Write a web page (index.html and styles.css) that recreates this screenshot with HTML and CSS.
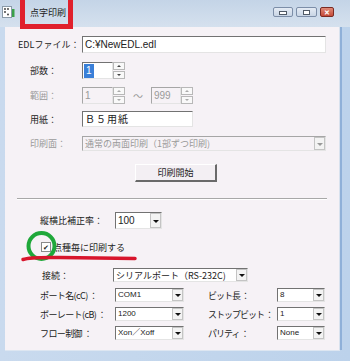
FILE: index.html
```html
<!DOCTYPE html>
<html lang="ja">
<head>
    <meta charset="utf-8">
    <title>点字印刷</title>
    <link rel="stylesheet" href="styles.css">
</head>
<body>

<div class="window">
    <div class="titlebar">
        <svg class="app-icon" width="13" height="12" viewBox="0 0 13 12">
            <rect x="0.5" y="0.5" width="9" height="11" fill="#fff" stroke="#8a9aa8"/>
            <circle cx="3" cy="3" r="0.9" fill="#333"/>
            <circle cx="6" cy="3" r="0.9" fill="#333"/>
            <circle cx="3" cy="6" r="0.9" fill="#333"/>
            <circle cx="6" cy="8.5" r="0.9" fill="#333"/>
            <rect x="10" y="3" width="2.5" height="8" fill="#3aa04a"/>
        </svg>
        <span class="title">点字印刷</span>
        <div class="caption-buttons">
            <div class="cap-btn cap-min"><span></span></div>
            <div class="cap-btn cap-max"><span></span></div>
            <div class="cap-btn cap-close">&#x2715;</div>
        </div>
    </div>

    <div class="client">
        <div class="row row-edl">
            <label class="lbl lbl-edl">EDLファイル：</label>
            <div class="edit w-edl">C:¥NewEDL.edl</div>
        </div>

        <div class="row row-copies">
            <label class="lbl lbl-main">部数：</label>
            <div class="edit w-spin"><span class="selected">1</span></div>
            <div class="spin"><span class="up"></span><span class="down"></span></div>
        </div>

        <div class="row row-range disabled">
            <label class="lbl lbl-main">範囲：</label>
            <div class="edit w-spin">1</div>
            <div class="spin"><span class="up"></span><span class="down"></span></div>
            <span class="tilde">～</span>
            <div class="edit w-spin2">999</div>
            <div class="spin"><span class="up"></span><span class="down"></span></div>
        </div>

        <div class="row row-paper">
            <label class="lbl lbl-main">用紙：</label>
            <div class="edit w-paper wide">Ｂ５用紙</div>
        </div>

        <div class="row row-side disabled">
            <label class="lbl lbl-main">印刷面：</label>
            <div class="combo w-side">
                <span class="combo-text">通常の両面印刷（1部ずつ印刷)</span>
                <span class="drop"></span>
            </div>
        </div>

        <div class="row row-button">
            <button class="push">印刷開始</button>
        </div>

        <div class="separator"></div>

        <div class="row row-ratio">
            <label class="lbl lbl-ratio">縦横比補正率：</label>
            <div class="combo w-ratio">
                <span class="combo-text latin">100</span>
                <span class="drop"></span>
            </div>
        </div>

        <div class="row row-check">
            <span class="checkbox">&#x2714;</span>
            <label class="check-label">点種毎に印刷する</label>
        </div>

        <div class="row row-conn">
            <label class="lbl lbl-conn">接続：</label>
            <div class="combo w-conn">
                <span class="combo-text">シリアルポート（RS-232C)</span>
                <span class="drop"></span>
            </div>
        </div>

        <div class="serial">
            <label class="lbl">ポート名(cC) ：</label>
            <div class="combo"><span class="combo-text small">COM1</span><span class="drop"></span></div>
            <label class="lbl lbl-right">ビット長 ：</label>
            <div class="combo"><span class="combo-text small">8</span><span class="drop"></span></div>

            <label class="lbl">ボーレート(cB) ：</label>
            <div class="combo"><span class="combo-text small">1200</span><span class="drop"></span></div>
            <label class="lbl lbl-right">ストップビット ：</label>
            <div class="combo"><span class="combo-text small">1</span><span class="drop"></span></div>

            <label class="lbl">フロー制御 ：</label>
            <div class="combo"><span class="combo-text small">Xon／Xoff</span><span class="drop"></span></div>
            <label class="lbl lbl-right">パリティ ：</label>
            <div class="combo"><span class="combo-text small">None</span><span class="drop"></span></div>
        </div>
    </div>

    <!-- hand-drawn marks on top of the screenshot -->
    <svg class="marks" width="350" height="361" viewBox="0 0 350 361">
        <rect x="22.5" y="-5" width="48" height="31.5" fill="none" stroke="#e0202c" stroke-width="5"/>
        <circle cx="41.5" cy="246" r="13" fill="none" stroke="#1fa83a" stroke-width="4"/>
        <path d="M23 259.5 Q30 257 60 257.5 T135 258.5" fill="none" stroke="#d8152c" stroke-width="3.5" stroke-linecap="round"/>
    </svg>
</div>

</body>
</html>
```

FILE: styles.css
```css
body {
    margin: 0;
    font-family: "Noto Sans CJK JP", sans-serif;
    font-size: 9px;
    color: #222;
}
.window {
    position: relative;
    width: 350px;
    height: 361px;
    box-sizing: border-box;
    display: flex;
    flex-direction: column;
    background: linear-gradient(90deg, #c9daee 0, #bcd2eb 100%);
}
.titlebar {
    height: 27px;
    display: flex;
    align-items: flex-start;
    background: linear-gradient(#c4d4e7, #d5e1ee);
}
.app-icon {
    margin: 6px 0 0 2px;
}
.title {
    margin: 6px 0 0 15px;
    font-size: 9px;
    color: #1c1c1c;
}
.caption-buttons {
    display: flex;
    margin: 7px 16px 0 auto;
}
.cap-btn {
    height: 10px;
    box-sizing: border-box;
    border: 1px solid #7c8ea8;
    border-radius: 2px;
    background: linear-gradient(#e4ebf4, #c8d5e5);
    display: flex;
    align-items: center;
    justify-content: center;
}
.cap-min {
    width: 20px;
    margin-right: 3px;
}
.cap-min span {
    width: 6px;
    height: 2px;
    margin-top: 2px;
    background: #fff;
    border: 1px solid #505a66;
}
.cap-max {
    width: 21px;
    margin-right: 3px;
}
.cap-max span {
    width: 5px;
    height: 3px;
    border: 1px solid #505a66;
    background: #fff;
}
.cap-close {
    width: 14px;
    border-color: #7a2a22;
    background: linear-gradient(#e08a78, #c44a38);
    color: #fff;
    font-size: 7px;
    font-weight: bold;
    line-height: 1;
}
.client {
    flex: 1;
    margin: 0 10px 11px 5px;
    background: #f6f2f6;
    border-right: 1px solid #d8e2ee;
    box-shadow: 2px 0 0 #8fb0d8, 0 1px 0 #dde6f1;
}
.row {
    display: flex;
    align-items: center;
}
.lbl {
    white-space: nowrap;
}
.edit, .combo {
    box-sizing: border-box;
    background: #fff;
    border-top: 1px solid #727272;
    border-left: 1px solid #727272;
    border-right: 1px solid #e4e4e4;
    border-bottom: 1px solid #e4e4e4;
    font-family: "Liberation Sans", "Noto Sans CJK JP", sans-serif;
    font-size: 10px;
    line-height: 1;
    padding: 0 2px;
    display: flex;
    align-items: center;
    white-space: nowrap;
    overflow: hidden;
}
.disabled .lbl,
.disabled .edit,
.disabled .combo-text,
.disabled .tilde {
    color: #9a9a9a;
}
.disabled .edit,
.disabled .combo {
    background: #f6f2f6;
    border-top-color: #a6a6a6;
    border-left-color: #a6a6a6;
}
.spin {
    width: 12px;
    height: 100%;
    display: flex;
    flex-direction: column;
    gap: 1px;
}
.spin span {
    flex: 1;
    box-sizing: border-box;
    border: 1px solid #b8b8b8;
    background: #f9f9f9;
    position: relative;
}
.spin span::after {
    content: "";
    position: absolute;
    left: 3px;
    top: 2px;
    border-left: 2px solid transparent;
    border-right: 2px solid transparent;
}
.spin .up::after {
    border-bottom: 2px solid #444;
}
.spin .down::after {
    border-top: 2px solid #444;
}
.disabled .spin .up::after {
    border-bottom-color: #aaa;
}
.disabled .spin .down::after {
    border-top-color: #aaa;
}
.selected {
    background: #3a7fd8;
    color: #fff;
    padding: 2px 2px;
    margin-left: -1px;
}

.row-edl {
    margin-top: 9px;
    padding-left: 13px;
    height: 17px;
}
.lbl-edl {
    width: 64px;
}
.w-edl {
    width: 244px;
    height: 17px;
    font-size: 10px;
}
.lbl-main {
    width: 52px;
}
.row-copies {
    margin-top: 9px;
    padding-left: 25px;
    height: 17px;
}
.w-spin {
    width: 31px;
    height: 17px;
}
.row-range {
    margin-top: 8px;
    padding-left: 25px;
    height: 17px;
}
.tilde {
    width: 26px;
    text-align: center;
    font-size: 10px;
}
.w-spin2 {
    width: 30px;
    height: 17px;
}
.row-paper {
    margin-top: 7px;
    padding-left: 25px;
    height: 16px;
}
.w-paper {
    width: 111px;
    height: 16px;
}
.wide {
    font-family: "Noto Sans CJK JP", sans-serif;
    font-size: 10px;
    letter-spacing: 1px;
}
.row-side {
    margin-top: 9px;
    padding-left: 25px;
    height: 15px;
}
.combo {
    padding-right: 0;
    justify-content: space-between;
}
.combo-text {
    font-family: "Noto Sans CJK JP", sans-serif;
    font-size: 9px;
}
.combo-text.latin {
    font-family: "Liberation Sans", sans-serif;
    font-size: 10px;
}
.combo-text.small {
    font-family: "Liberation Sans", "Noto Sans CJK JP", sans-serif;
    font-size: 8px;
}
.drop {
    width: 11px;
    height: 100%;
    box-sizing: border-box;
    border: 1px solid #c4c4c4;
    background: #f3f3f3;
    position: relative;
}
.drop::after {
    content: "";
    position: absolute;
    left: 2px;
    top: 50%;
    margin-top: -1px;
    border-left: 3px solid transparent;
    border-right: 3px solid transparent;
    border-top: 3px solid #111;
}
.disabled .drop::after {
    border-top-color: #999;
}
.w-side {
    width: 244px;
    height: 15px;
}
.row-button {
    margin-top: 13px;
    padding-left: 130px;
}
.push {
    width: 82px;
    height: 18px;
    box-sizing: border-box;
    font-family: "Noto Sans CJK JP", sans-serif;
    font-size: 9px;
    color: #222;
    background: #f3eff3;
    border-top: 1px solid #fff;
    border-left: 1px solid #fff;
    border-right: 2px solid #6a6a6a;
    border-bottom: 2px solid #6a6a6a;
    padding: 0;
}
.separator {
    margin: 16px 0 0 12px;
    width: 310px;
    height: 1px;
    background: #a8a8a8;
    border-bottom: 1px solid #fff;
}
.row-ratio {
    margin-top: 12px;
    padding-left: 35px;
    height: 17px;
}
.lbl-ratio {
    width: 75px;
}
.w-ratio {
    width: 47px;
    height: 17px;
}
.row-check {
    margin-top: 13px;
    padding-left: 36px;
    height: 10px;
}
.checkbox {
    width: 10px;
    height: 10px;
    box-sizing: border-box;
    border: 1px solid #8a8a8a;
    background: #fff;
    font-size: 7px;
    line-height: 8px;
    text-align: center;
    color: #222;
}
.check-label {
    margin-left: 2px;
}
.row-conn {
    margin-top: 16px;
    padding-left: 37px;
    height: 14px;
}
.lbl-conn {
    width: 71px;
}
.w-conn {
    width: 135px;
    height: 14px;
}
.serial {
    margin-top: 6px;
    padding-left: 35px;
    display: grid;
    grid-template-columns: 75px 69px 93px 48px;
    grid-auto-rows: 14px;
    row-gap: 5px;
    align-items: center;
}
.serial .lbl {
    letter-spacing: -0.6px;
}
.serial .lbl-right {
    padding-left: 24px;
    letter-spacing: -1px;
}
.serial .combo {
    height: 14px;
}
.marks {
    position: absolute;
    left: 0;
    top: 0;
    pointer-events: none;
}
```
